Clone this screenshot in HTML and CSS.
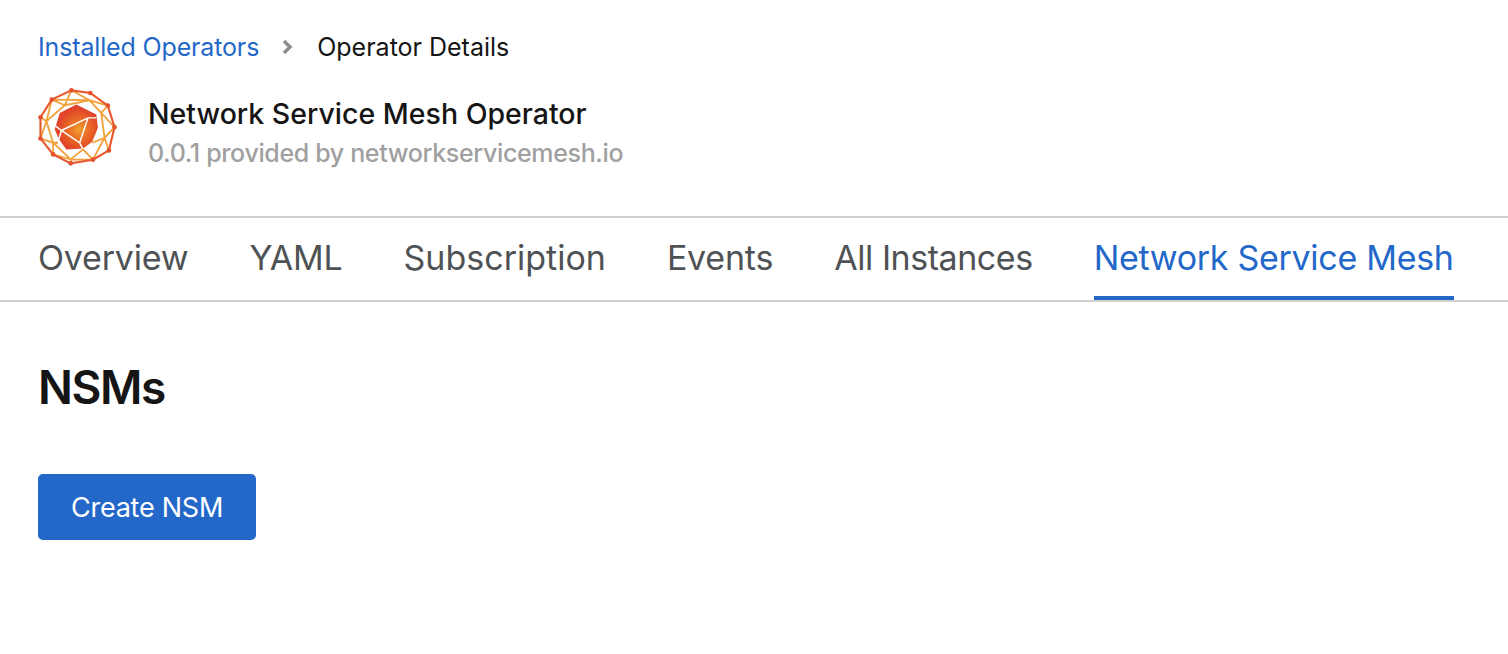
FILE: index.html
```html
<!DOCTYPE html>
<html lang="en">
<head>
<meta charset="utf-8">
<title>Operator Details</title>
<link rel="stylesheet" href="styles.css">
</head>
<body>
<header class="page-head">
  <nav class="crumbs">
    <a class="crumb-link" href="#">Installed Operators</a>
    <svg class="crumb-sep" viewBox="0 0 14 16"><path d="M3 2l6 6-6 6" fill="none" stroke="#8a8d90" stroke-width="3.4"/></svg>
    <span class="crumb-current">Operator Details</span>
  </nav>
  <div class="operator">
    <svg class="logo" viewBox="55 40 240 235">
      <defs>
        <radialGradient id="core" gradientUnits="userSpaceOnUse" cx="178" cy="165" r="75">
          <stop offset="0" stop-color="#eea02f"/>
          <stop offset="0.4" stop-color="#ea6c25"/>
          <stop offset="0.85" stop-color="#e0432a"/>
        </radialGradient>
      </defs>
      <path fill="url(#core)" d="M170 90l60 30 5 40-17 42-28 20-50 3-22-30-13-30 15-50z"/>
      <g fill="none" stroke="#fff" stroke-width="4.5">
        <path d="M230 130H205L125 168L180 205L205 130M180 205L190 225M125 168L115 203M125 168L108 155"/>
      </g>
      <g fill="none" stroke="#f2a23c" stroke-width="5.5">
        <path d="M155 47L135 92M155 47L210 77M96 75L210 77L265 93M96 75L80 140M135 92L80 140L100 205L153 255L220 256L255 190L245 115L210 77M135 92L210 77M245 115L285 158L255 190L268 228M245 115L265 93M80 140L62 128M80 140L62 192L100 205L100 240L153 255L153 267M190 225L153 255M190 225L220 256M255 190L218 205M135 92L96 75M100 205L115 205"/>
      </g>
      <g fill="none" stroke="#e8592f" stroke-width="6.5">
        <path d="M155 47l57 8 53 38 20 65-17 70-48 28-67 11-53-27-38-48 0-64 34-53z"/>
      </g>
      <g fill="#e4512d">
        <circle cx="155" cy="47" r="7"/><circle cx="212" cy="55" r="7"/><circle cx="265" cy="93" r="7"/><circle cx="285" cy="158" r="7"/><circle cx="268" cy="228" r="7"/><circle cx="220" cy="256" r="7"/><circle cx="153" cy="267" r="7"/><circle cx="100" cy="240" r="7"/><circle cx="62" cy="192" r="7"/><circle cx="62" cy="128" r="7"/><circle cx="96" cy="75" r="7"/>
      </g>
    </svg>
    <div class="operator-text">
      <h1 class="operator-name">Network Service Mesh Operator</h1>
      <div class="operator-meta">0.0.1 provided by networkservicemesh.io</div>
    </div>
  </div>
</header>
<nav class="tabs">
  <a class="tab" href="#">Overview</a>
  <a class="tab" href="#">YAML</a>
  <a class="tab tab-loose" href="#">Subscription</a>
  <a class="tab" href="#">Events</a>
  <a class="tab tab-tight" href="#">All Instances</a>
  <a class="tab tab-active" href="#">Network Service Mesh</a>
</nav>
<main class="content">
  <h2 class="section-title">NSMs</h2>
  <button class="primary-btn">Create NSM</button>
</main>
</body>
</html>
```
FILE: styles.css
```css
* { box-sizing: border-box; }
html, body { margin: 0; background: #fff; }
body {
  height: 654px;
  overflow: hidden;
  font-family: Inter, "Open Sans", sans-serif;
  color: #151515;
}
.page-head {
  height: 216px;
  padding: 32px 38px 0;
}
.crumbs {
  display: flex;
  align-items: center;
  height: 30px;
  font-size: 25px;
}
.crumb-link { color: #2368c8; text-decoration: none; letter-spacing: -0.15px; }
.crumb-sep { width: 14px; height: 16px; margin: 0 22px 0 22px; }
.crumb-current { color: #151515; }
.operator {
  display: flex;
  align-items: flex-start;
  margin-top: 26px;
}
.logo { width: 80px; height: 78px; flex: none; }
.operator-text { margin: 8px 0 0 30px; }
.operator-name {
  margin: 0;
  font-size: 28.5px;
  line-height: 36px;
  font-weight: 500;
}
.operator-meta {
  margin-top: 5px;
  font-size: 25px;
  line-height: 32px;
  font-weight: 500;
  letter-spacing: -0.35px;
  color: #a0a0a0;
}
.tabs {
  display: flex;
  gap: 61px;
  height: 86px;
  padding: 0 38px;
  border-top: 2px solid #d2d2d2;
  border-bottom: 2px solid #d2d2d2;
}
.tab {
  display: block;
  height: 82px;
  line-height: 80px;
  font-size: 34px;
  color: #4f5255;
  text-decoration: none;
  letter-spacing: -0.2px;
}
.tab-loose { letter-spacing: 0; }
.tab-tight { letter-spacing: -0.45px; }
.tab-active {
  color: #2368c8;
  letter-spacing: -0.3px;
  border-bottom: 4px solid #2368c8;
}
.content { padding: 0 38px; }
.section-title {
  margin: 51px 0 0;
  font-size: 46px;
  line-height: 68px;
  font-weight: 600;
  letter-spacing: -1.4px;
}
.primary-btn {
  display: block;
  margin-top: 53px;
  width: 218px;
  height: 66px;
  border: 0;
  border-radius: 5px;
  background: #2368c8;
  color: #fff;
  font: 400 27px Inter, sans-serif;
  letter-spacing: -0.25px;
}
```
